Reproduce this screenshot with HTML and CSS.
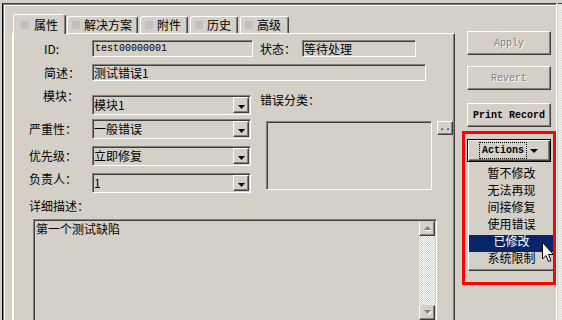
FILE: index.html
```html
<!DOCTYPE html>
<html lang="zh-CN">
<head>
    <meta charset="UTF-8">
    <meta name="viewport" content="width=device-width, initial-scale=1.0">
    <title>缺陷属性</title>
    <link rel="stylesheet" href="styles.css">
</head>
<body>
    <div class="window">
        <div class="tabbox">
            <div class="tabstrip">
                <div class="tab active w1"><span class="tab-icon"></span>属性</div>
                <div class="tab w2"><span class="tab-icon"></span>解决方案</div>
                <div class="tab w3"><span class="tab-icon"></span>附件</div>
                <div class="tab w3"><span class="tab-icon"></span>历史</div>
                <div class="tab w4"><span class="tab-icon"></span>高级</div>
            </div>
            <div class="panel">
                <div class="row row-id">
                    <span class="lbl indent">ID:</span>
                    <div class="field f-id"><span class="mono">test00000001</span></div>
                    <span class="lbl-state">状态：</span>
                    <div class="field f-state">等待处理</div>
                </div>
                <div class="row row-summary">
                    <span class="lbl indent">简述：</span>
                    <div class="field f-summary">测试错误1</div>
                </div>
                <div class="section">
                    <div class="selects">
                        <div class="sel-row r1">
                            <span class="lbl indent-s">模块：</span>
                            <div class="combo">模块1<span class="combo-btn"><svg width="7" height="4" viewBox="0 0 7 4"><path d="M0 0h7L3.5 4z"/></svg></span></div>
                        </div>
                        <div class="sel-row r2">
                            <span class="lbl">严重性：</span>
                            <div class="combo">一般错误<span class="combo-btn"><svg width="7" height="4" viewBox="0 0 7 4"><path d="M0 0h7L3.5 4z"/></svg></span></div>
                        </div>
                        <div class="sel-row r3">
                            <span class="lbl">优先级：</span>
                            <div class="combo">立即修复<span class="combo-btn"><svg width="7" height="4" viewBox="0 0 7 4"><path d="M0 0h7L3.5 4z"/></svg></span></div>
                        </div>
                        <div class="sel-row r4">
                            <span class="lbl">负责人：</span>
                            <div class="combo">1<span class="combo-btn"><svg width="7" height="4" viewBox="0 0 7 4"><path d="M0 0h7L3.5 4z"/></svg></span></div>
                        </div>
                    </div>
                    <div class="category">
                        <div class="cat-label">错误分类：</div>
                        <div class="cat-body">
                            <div class="cat-box"></div>
                            <button class="dots">..</button>
                        </div>
                    </div>
                </div>
                <div class="desc-label">详细描述：</div>
                <div class="desc">
                    <div class="desc-text">第一个测试缺陷</div>
                    <div class="scrollbar">
                        <div class="sb-btn"><svg width="7" height="5" viewBox="0 0 7 5"><path d="M3.5 1L7 5H0z" fill="#fff" transform="translate(1 0)"/><path d="M3.5 0L7 4H0z" fill="#808080"/></svg></div>
                        <div class="sb-track"></div>
                        <div class="sb-btn"><svg width="7" height="5" viewBox="0 0 7 5"><path d="M0 1h7L3.5 5z" fill="#fff" transform="translate(1 0)"/><path d="M0 0h7L3.5 4z" fill="#808080"/></svg></div>
                    </div>
                </div>
            </div>
        </div>
        <div class="side">
            <button class="btn btn-apply" disabled>Apply</button>
            <button class="btn btn-revert" disabled>Revert</button>
            <button class="btn btn-print">Print Record</button>
            <div class="callout">
                <button class="btn-actions"><span class="focus">Actions</span><svg width="8" height="4" viewBox="0 0 8 4"><path d="M0 0h8L4 4z"/></svg></button>
                <ul class="menu">
                    <li>暂不修改</li>
                    <li>无法再现</li>
                    <li>间接修复</li>
                    <li>使用错误</li>
                    <li class="selected">已修改</li>
                    <li>系统限制</li>
                </ul>
                <svg class="cursor" width="13" height="21" viewBox="0 0 13 21"><path d="M.5.5V17L4 13.5l2.5 6 2.5-1-2.5-6h5z" fill="#fff" stroke="#000"/></svg>
            </div>
        </div>
    </div>
    <div class="edge"></div>
</body>
</html>
```

FILE: styles.css
```css
/* Classic dialog look */
* {
    box-sizing: border-box;
}
body {
    font-family: "Noto Sans CJK SC", "Liberation Sans", sans-serif;
    font-size: 12px;
    line-height: 12px;
    background-color: #d4d0c8;
    color: #000;
    margin: 0;
    height: 320px;
    overflow: hidden;
    display: flex;
    align-items: flex-start;
}
.window {
    width: 555px;
    height: 330px;
    margin: 3px 0 0 2px;
    padding: 10px 0 0 9px;
    display: flex;
    border-top: 1px solid #404040;
    border-left: 1px solid #000;
    border-right: 1px solid #fff;
    box-shadow: inset 1px 1px #808080, inset 2px 2px #fff;
}
.edge {
    width: 4px;
    height: 330px;
    margin: 3px 0 0 1px;
    border-top: 1px solid #404040;
    background: repeating-conic-gradient(#fff 0 25%, #d4d0c8 0 50%) 0 0 / 2px 2px;
}

/* Tabs */
.tabbox {
    width: 443px;
}
.tabstrip {
    display: flex;
    align-items: flex-end;
    height: 19px;
    padding-left: 1px;
    position: relative;
    z-index: 1;
}
.tab {
    height: 17px;
    display: flex;
    align-items: center;
    gap: 4px;
    padding-left: 4px;
    margin-right: 2px;
    border: 1px solid #fff;
    border-right-color: #404040;
    border-bottom: 0;
    border-radius: 3px 3px 0 0;
    box-shadow: inset -1px 0 #808080;
    white-space: nowrap;
}
.tab.active {
    height: 20px;
    margin-bottom: -1px;
    margin-right: 1px;
    padding-left: 7px;
    gap: 5px;
    background-color: #d4d0c8;
}
.w1 { width: 53px; }
.w2 { width: 71px; }
.w3 { width: 48px; }
.w4 { width: 49px; }
.tab-icon {
    width: 8px;
    height: 8px;
    background-color: #c0c0c0;
    flex-shrink: 0;
}
.panel {
    height: 300px;
    border: 1px solid;
    border-color: #fff #404040 #404040 #fff;
    box-shadow: inset -1px -1px #808080, inset 1px 0 #fff;
    padding-left: 16px;
}

/* Form */
.row {
    display: flex;
    align-items: center;
}
.row-id {
    margin-top: 6px;
}
.row-summary {
    margin-top: 7px;
}
.lbl {
    width: 63px;
    flex-shrink: 0;
    white-space: nowrap;
}
.indent {
    padding-left: 15px;
}
.indent-s {
    padding-left: 14px;
}
.lbl-state {
    width: 42px;
    margin-left: 7px;
    white-space: nowrap;
}
.field,
.combo,
.cat-box,
.desc {
    border: 1px solid;
    border-color: #808080 #fff #fff #808080;
    box-shadow: inset 1px 1px #404040, inset -1px -1px #d4d0c8;
}
.field {
    height: 17px;
    display: flex;
    align-items: center;
    padding-left: 1px;
    white-space: nowrap;
}
.mono {
    font-family: "Liberation Mono", monospace;
    font-size: 10px;
    padding-left: 1px;
}
.f-id { width: 161px; }
.f-state { width: 114px; }
.f-summary { width: 334px; }

.section {
    display: flex;
}
.selects {
    width: 231px;
}
.sel-row {
    display: flex;
    align-items: center;
}
.r1 { margin-top: 14px; }
.r1 .lbl {
    align-self: flex-start;
    margin-top: -5px;
}
.r2 { margin-top: 4px; }
.r3 { margin-top: 7px; }
.r4 { margin-top: 7px; }
.r4 .lbl {
    align-self: flex-start;
}
.combo {
    width: 159px;
    height: 20px;
    display: flex;
    align-items: center;
    justify-content: space-between;
    padding: 0 1px 0 1px;
    white-space: nowrap;
}
.combo-btn {
    width: 16px;
    height: 16px;
    display: flex;
    align-items: center;
    justify-content: center;
    padding-top: 3px;
    border: 1px solid;
    border-color: #fff #404040 #404040 #fff;
    box-shadow: inset -1px -1px #808080;
}
.combo-btn svg {
    display: block;
}
.category {
    margin-top: 13px;
}
.cat-label {
    white-space: nowrap;
}
.cat-body {
    display: flex;
    align-items: flex-start;
    margin-top: 15px;
    padding-left: 6px;
}
.cat-box {
    width: 166px;
    height: 69px;
}
.dots {
    width: 16px;
    height: 14px;
    margin-left: 5px;
    padding: 0;
    font-family: "Liberation Mono", monospace;
    font-size: 10px;
    line-height: 10px;
    background-color: #d4d0c8;
    border: 1px solid;
    border-color: #fff #404040 #404040 #fff;
    box-shadow: inset -1px -1px #808080;
}
.desc-label {
    margin-top: 7px;
}
.desc {
    display: flex;
    width: 404px;
    height: 110px;
    margin: 7px 0 0 4px;
    padding: 1px 1px 1px 1px;
}
.desc-text {
    flex: 1;
    padding: 2px 0 0 1px;
}
.scrollbar {
    width: 16px;
    display: flex;
    flex-direction: column;
}
.sb-btn {
    height: 15px;
    display: flex;
    align-items: center;
    justify-content: center;
    border: 1px solid;
    border-color: #d4d0c8 #404040 #404040 #fff;
    box-shadow: inset -1px -1px #808080;
}
.sb-btn svg {
    display: block;
}
.sb-track {
    height: 69px;
    background: repeating-conic-gradient(#fff 0 25%, #d4d0c8 0 50%) 0 0 / 2px 2px;
}

/* Right buttons */
.side {
    width: 94px;
    margin-left: 7px;
    display: flex;
    flex-direction: column;
}
.btn {
    width: 84px;
    height: 24px;
    margin-left: 5px;
    padding: 0;
    font-family: "Liberation Mono", monospace;
    font-size: 10px;
    font-weight: bold;
    color: #000;
    background-color: #d4d0c8;
    border: 1px solid;
    border-color: #fff #404040 #404040 #fff;
    box-shadow: inset -1px -1px #808080;
}
.btn:disabled {
    font-weight: normal;
    color: #808080;
    text-shadow: 1px 1px #fff;
}
.btn-apply { margin-top: 17px; }
.btn-revert { margin-top: 11px; }
.btn-print { margin-top: 13px; }
.callout {
    position: relative;
    height: 154px;
    margin-top: 4px;
    padding: 8px 0 0 5px;
}
.callout::after {
    content: "";
    position: absolute;
    inset: 0;
    border: 3px solid #f00;
    pointer-events: none;
}
.btn-actions {
    width: 84px;
    height: 23px;
    padding: 0;
    display: flex;
    align-items: center;
    justify-content: center;
    gap: 4px;
    font-family: "Liberation Mono", monospace;
    font-size: 10px;
    font-weight: bold;
    color: #000;
    background-color: #d4d0c8;
    border: 1px solid #000;
    box-shadow: inset 1px 1px #fff, inset -1px -1px #404040, inset -2px -2px #808080;
}
.focus {
    outline: 1px dotted #000;
    padding: 1px 2px;
    line-height: 13px;
}
.menu {
    list-style: none;
    width: 86px;
    margin: 0 0 0 1px;
    padding: 5px 0 0 0;
    border-left: 1px solid #fff;
    border-bottom: 1px solid #404040;
    box-shadow: inset 0 -1px #808080;
    height: 109px;
}
.menu li {
    height: 17px;
    line-height: 12px;
    text-align: center;
}
.menu li.selected {
    background-color: #0a246a;
    color: #fff;
}
.cursor {
    position: absolute;
    left: 80px;
    top: 111px;
}
```
